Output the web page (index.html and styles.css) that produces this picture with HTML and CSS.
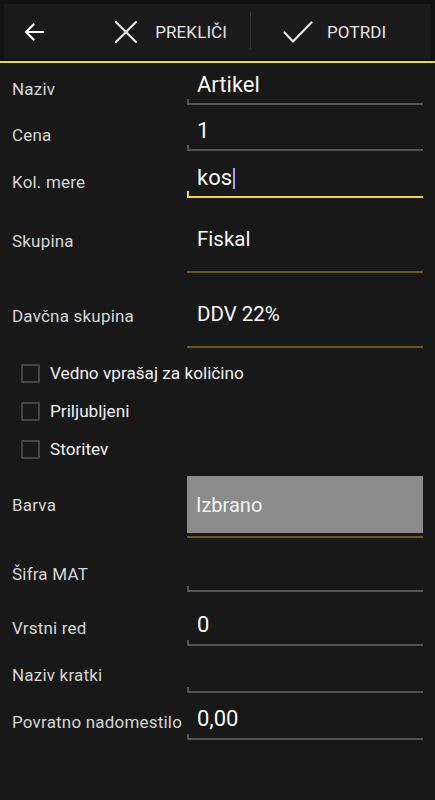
FILE: index.html
```html
<!DOCTYPE html>
<html lang="sl">
<head>
<meta charset="utf-8">
<title>Artikel</title>
<link rel="stylesheet" href="styles.css">
</head>
<body>
<div class="screen">
  <header class="toolbar">
    <div class="toolbar-inner">
      <button class="tb-back" aria-label="Nazaj">
        <svg width="20" height="18" viewBox="0 0 20 18"><path d="M19 9H2M9.5 1.5L2 9l7.5 7.5" fill="none" stroke="#fff" stroke-width="2.2" stroke-linecap="round" stroke-linejoin="round"/></svg>
      </button>
      <button class="tb-btn tb-cancel">
        <svg width="24" height="22" viewBox="0 0 24 22"><path d="M2 1L22 21M22 1L2 21" fill="none" stroke="#e6e6e6" stroke-width="2.2" stroke-linecap="round"/></svg>
        <span>PREKLIČI</span>
      </button>
      <span class="tb-divider"></span>
      <button class="tb-btn tb-ok">
        <svg width="30" height="22" viewBox="0 0 30 22"><path d="M1.5 11.5L10 20.5 28.5 1.5" fill="none" stroke="#e6e6e6" stroke-width="2.2" stroke-linecap="round" stroke-linejoin="round"/></svg>
        <span>POTRDI</span>
      </button>
    </div>
  </header>

  <main class="form">
    <div class="row edit r-naziv">
      <label class="lbl">Naziv</label>
      <div class="field"><span class="val">Artikel</span></div>
    </div>
    <div class="row edit r-cena">
      <label class="lbl">Cena</label>
      <div class="field"><span class="val">1</span></div>
    </div>
    <div class="row edit r-kol">
      <label class="lbl">Kol. mere</label>
      <div class="field focused"><span class="val">kos<span class="cursor"></span></span></div>
    </div>
    <div class="row spin r-skup">
      <label class="lbl">Skupina</label>
      <div class="field"><span class="val">Fiskal</span></div>
    </div>
    <div class="row spin r-davc">
      <label class="lbl">Davčna skupina</label>
      <div class="field"><span class="val">DDV 22%</span></div>
    </div>

    <div class="checks">
      <div class="check"><span class="box"></span><span>Vedno vprašaj za količino</span></div>
      <div class="check"><span class="box"></span><span>Priljubljeni</span></div>
      <div class="check"><span class="box"></span><span>Storitev</span></div>
    </div>

    <div class="row color r-barva">
      <label class="lbl">Barva</label>
      <div class="field"><div class="swatch">Izbrano</div></div>
    </div>

    <div class="row edit lower r-sifra">
      <label class="lbl">Šifra MAT</label>
      <div class="field"><span class="val"></span></div>
    </div>
    <div class="row edit lower r-vrstni">
      <label class="lbl">Vrstni red</label>
      <div class="field"><span class="val">0</span></div>
    </div>
    <div class="row edit lower r-kratki">
      <label class="lbl">Naziv kratki</label>
      <div class="field"><span class="val"></span></div>
    </div>
    <div class="row edit lower r-povr">
      <label class="lbl">Povratno nadomestilo</label>
      <div class="field"><span class="val">0,00</span></div>
    </div>
  </main>
</div>
</body>
</html>
```

FILE: styles.css
```css
* { box-sizing: border-box; }
html, body { margin: 0; padding: 0; }
body {
  background: #181818;
  font-family: Roboto, "Noto Sans", "Liberation Sans", sans-serif;
  color: #f2f2f2;
  width: 435px;
  height: 800px;
  overflow: hidden;
}
.screen { width: 435px; }

/* toolbar */
.toolbar {
  height: 63px;
  background: #121212;
  padding: 4px 4px 0;
  border-bottom: 2px solid #e8d837;
}
.toolbar-inner {
  height: 55px;
  background: #1a1a1a;
  display: flex;
  align-items: center;
}
button {
  background: none;
  border: 0;
  padding: 0;
  color: inherit;
  font: inherit;
  cursor: pointer;
}
.tb-back {
  width: 58px;
  height: 100%;
  display: flex;
  align-items: center;
  justify-content: center;
  padding-left: 2px;
}
.tb-btn {
  display: flex;
  align-items: center;
  height: 100%;
  font-size: 17px;
  color: #e4e4e4;
  letter-spacing: 0.1px;
}
.tb-cancel {
  flex: 1;
  justify-content: flex-end;
  padding-right: 23px;
  gap: 17px;
}
.tb-divider {
  width: 1px;
  height: 37px;
  background: #333;
  margin-top: -2px;
}
.tb-ok {
  width: 180px;
  padding-left: 32px;
  gap: 14px;
}

/* form */
.form { padding: 0 12px; }
.row {
  display: grid;
  grid-template-columns: 175px 1fr;
  align-items: end;
}
.lbl {
  font-size: 17px;
  line-height: 20px;
  letter-spacing: 0.2px;
  color: #d6d6d6;
  white-space: nowrap;
}
.field {
  position: relative;
  height: 100%;
  display: flex;
  align-items: flex-end;
}
.val {
  position: relative;
  color: #f7f7f7;
}

/* edit text rows */
.edit .lbl { padding-bottom: 6px; }
.edit.lower .lbl { padding-bottom: 8px; }
.edit .field { border-bottom: 2px solid #545454; }
.edit .field::before {
  content: "";
  position: absolute;
  left: 0;
  bottom: 0;
  width: 2px;
  height: 4px;
  background: #545454;
}
.edit .val {
  font-size: 22px;
  line-height: 24px;
  padding: 0 0 6px 10px;
}
.edit.lower .val { padding-bottom: 7px; }
.edit .field.focused { border-bottom: 2px solid #ecd83c; }
.edit .field.focused::before { background: #ecd83c; height: 5px; }
.cursor {
  display: inline-block;
  width: 2px;
  height: 21px;
  background: #a79cf2;
  vertical-align: -4px;
  margin-left: 1px;
}

.r-naziv { height: 42px; }
.r-cena { height: 46px; }
.r-kol { height: 47px; }
.r-sifra { height: 54px; }
.r-vrstni { height: 54px; }
.r-kratki { height: 47px; }
.r-povr { height: 47px; }

/* spinner rows */
.spin { height: 75px; }
.spin .field { border-bottom: 2px solid #66571f; }
.spin .lbl { padding-bottom: 22px; }
.spin .val {
  font-size: 20.5px;
  line-height: 24px;
  padding: 0 0 20px 10px;
}

/* checkboxes */
.checks {
  padding: 6px 0 8px 9px;
}
.check {
  height: 38px;
  display: flex;
  align-items: center;
  gap: 10px;
  font-size: 17.2px;
  color: #f2f2f2;
}
.box {
  width: 19px;
  height: 19px;
  border: 2px solid #444;
  border-radius: 1px;
}

/* colour row */
.color { height: 62px; }
.color .lbl { padding-bottom: 23px; }
.color .field {
  border-bottom: 2px solid #66571f;
  padding-bottom: 3px;
}
.swatch {
  width: 100%;
  height: 57px;
  background: #8b8b8b;
  color: #f4f4f4;
  font-size: 20px;
  display: flex;
  align-items: center;
  padding-left: 9px;
}
```
